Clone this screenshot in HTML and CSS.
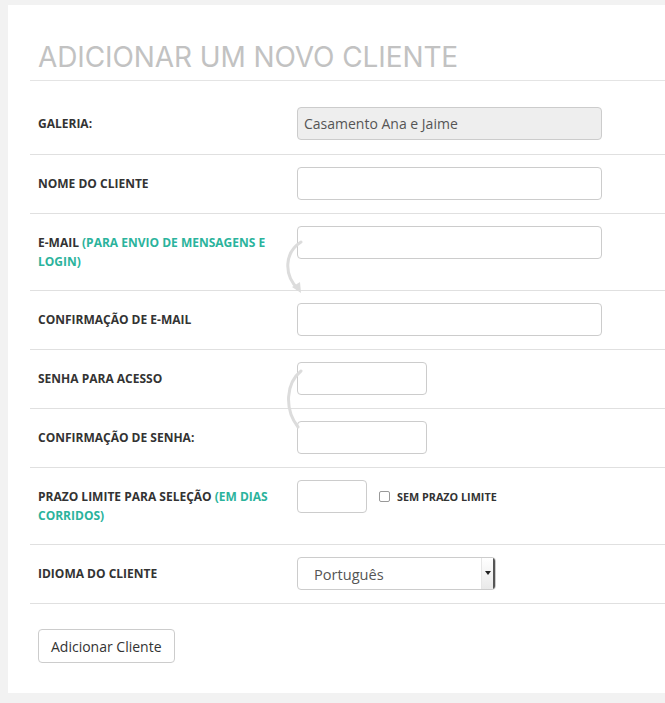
FILE: index.html
```html
<!DOCTYPE html>
<html lang="pt-BR">
<head>
    <meta charset="UTF-8">
    <meta name="viewport" content="width=device-width, initial-scale=1.0">
    <title>Adicionar um novo cliente</title>
    <link rel="stylesheet" href="styles.css">
</head>
<body>
    <div class="panel">
        <h1>Adicionar um novo cliente</h1>
        <form class="client-form">
            <div class="row first">
                <label>Galeria:</label>
                <div class="field">
                    <input type="text" class="wide" value="Casamento Ana e Jaime" readonly>
                </div>
            </div>

            <div class="row">
                <label for="nome">Nome do cliente</label>
                <div class="field"><input type="text" id="nome" class="wide"></div>
            </div>

            <div class="row">
                <label for="email">E-mail <span class="hint">(para envio de mensagens e</span> <span class="hint">login)</span></label>
                <div class="field"><input type="email" id="email" class="wide"></div>
            </div>

            <div class="row">
                <label for="email2">Confirmação de e-mail</label>
                <div class="field"><input type="email" id="email2" class="wide"></div>
            </div>

            <div class="row">
                <label for="senha">Senha para acesso</label>
                <div class="field"><input type="password" id="senha" class="medium"></div>
            </div>

            <div class="row">
                <label for="senha2">Confirmação de senha:</label>
                <div class="field"><input type="password" id="senha2" class="medium"></div>
            </div>

            <div class="row">
                <label for="prazo">Prazo limite para seleção <span class="hint">(em dias</span> <span class="hint">corridos)</span></label>
                <div class="field">
                    <input type="text" id="prazo" class="small">
                    <span class="check"><span class="box"></span>Sem prazo limite</span>
                </div>
            </div>

            <div class="row">
                <label>Idioma do cliente</label>
                <div class="field">
                    <div class="select">
                        <span>Português</span>
                        <span class="caret"></span>
                    </div>
                </div>
            </div>

            <div class="actions">
                <button type="button">Adicionar Cliente</button>
            </div>

            <!-- setas de ligação entre os campos -->
            <svg class="arrow arrow-email" width="30" height="56" viewBox="0 0 30 56">
                <path d="M18 2 C2 12 0 34 15 49" fill="none" stroke="#dcdcdc" stroke-width="3" stroke-linecap="round"/>
                <path d="M9 47 L18 53 L17 42 Z" fill="#dcdcdc"/>
            </svg>
            <svg class="arrow arrow-senha" width="30" height="64" viewBox="0 0 30 64">
                <path d="M17 2 C2 14 0 40 14 58" fill="none" stroke="#dcdcdc" stroke-width="3" stroke-linecap="round"/>
            </svg>
        </form>
    </div>
</body>
</html>
```

FILE: styles.css
```css
* {
    box-sizing: border-box;
    margin: 0;
    padding: 0;
}

body {
    background-color: #f2f2f2;
    padding: 5px 0 11px 8px;
    font-family: "Open Sans", sans-serif;
    color: #333;
    overflow: hidden;
}

.panel {
    background: #fff;
    padding: 30px 0 30px 22px;
}

h1 {
    font-family: Inter, "Noto Sans", sans-serif;
    font-weight: 400;
    font-size: 28px;
    line-height: 45px;
    text-transform: uppercase;
    color: #c2c2c2;
    padding-left: 8px;
    border-bottom: 1px solid #e4e4e4;
    letter-spacing: -0.1px;
}

.client-form {
    position: relative;
}

.row {
    display: flex;
    align-items: flex-start;
    padding: 12px 0 13px 8px;
    border-bottom: 1px solid #e0e0e0;
}

.row.first {
    padding-top: 26px;
    padding-bottom: 14px;
}

.row label {
    width: 259px;
    padding: 7px 22px 0 0;
    margin-bottom: 6px;
    font-size: 12px;
    font-weight: 700;
    line-height: 19px;
    text-transform: uppercase;
    color: #333;
}

.hint {
    color: #2bb39c;
}

.field {
    display: flex;
    align-items: center;
}

input {
    height: 33px;
    border: 1px solid #ccc;
    border-radius: 4px;
    padding: 6px 6px;
    font-family: "Open Sans", sans-serif;
    font-size: 14px;
    color: #555;
    background: #fff;
}

input[readonly] {
    background: #eee;
}

input.wide {
    width: 305px;
}

input.medium {
    width: 130px;
}

input.small {
    width: 70px;
}

.check {
    display: flex;
    align-items: center;
    margin-left: 12px;
    font-size: 10.8px;
    font-weight: 700;
    text-transform: uppercase;
    color: #333;
}

.check .box {
    width: 11px;
    height: 11px;
    border: 1px solid #999;
    border-radius: 2px;
    margin-right: 7px;
}

.select {
    width: 199px;
    height: 33px;
    border: 1px solid #ccc;
    border-radius: 4px;
    display: flex;
    align-items: center;
    justify-content: space-between;
    padding-left: 16px;
    font-size: 14.6px;
    color: #555;
    overflow: hidden;
}

.caret {
    align-self: stretch;
    width: 14px;
    border-left: 1px solid #e6e6e6;
    border-right: 2px solid #555;
    background: linear-gradient(#fff, #e9e9e9);
    position: relative;
}

.caret::after {
    content: '';
    position: absolute;
    left: 3px;
    top: 13px;
    border-left: 3px solid transparent;
    border-right: 3px solid transparent;
    border-top: 4px solid #222;
}

.actions {
    padding: 25px 0 0 8px;
}

button {
    height: 34px;
    padding: 0 12px;
    background: #fff;
    border: 1px solid #ccc;
    border-radius: 4px;
    font-family: "Open Sans", sans-serif;
    font-size: 14px;
    color: #333;
    cursor: pointer;
}

.arrow {
    position: absolute;
}

.arrow-email {
    left: 253px;
    top: 159px;
}

.arrow-senha {
    left: 254px;
    top: 288px;
}
```
